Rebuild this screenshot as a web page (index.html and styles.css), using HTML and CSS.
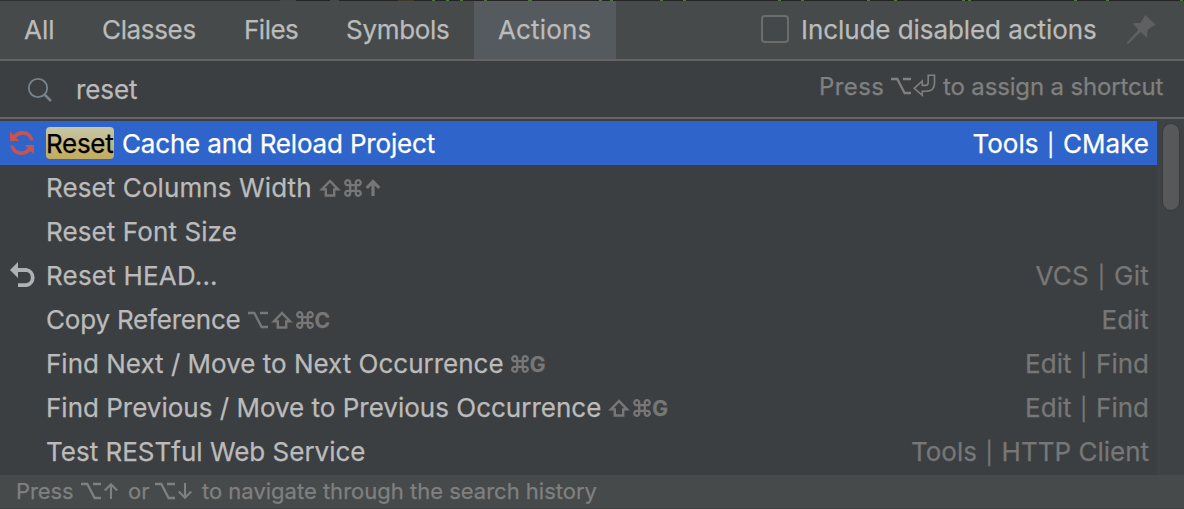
FILE: index.html
```html
<!DOCTYPE html>
<html lang="en">
<head>
<meta charset="utf-8">
<title>Search Everywhere</title>
<link rel="stylesheet" href="styles.css">
</head>
<body>
<svg class="defs" width="0" height="0" aria-hidden="true">
  <symbol id="shift" viewBox="0 0 22 18"><path d="M11 2 3 10.4H6.8V16.5H15.2V10.4H19Z" fill="none" stroke="currentColor" stroke-width="2.4"/></symbol>
  <symbol id="cmd" viewBox="0 0 18 18"><path d="M6.2 6.2H11.8V11.8H6.2ZM6.2 6.2H4A2.5 2.5 0 1 1 6.2 4ZM11.8 6.2V4A2.5 2.5 0 1 1 14 6.2ZM11.8 11.8H14A2.5 2.5 0 1 1 11.8 14ZM6.2 11.8V14A2.5 2.5 0 1 1 4 11.8Z" fill="none" stroke="currentColor" stroke-width="2.3"/></symbol>
  <symbol id="opt" viewBox="0 0 20 18"><path d="M0 2H6.3L13.6 16H20M12 2H20" fill="none" stroke="currentColor" stroke-width="2.3"/></symbol>
  <symbol id="upbold" viewBox="0 0 16 18"><path d="M8 17V3M1.7 9 8 2.6 14.3 9" fill="none" stroke="currentColor" stroke-width="3.2"/></symbol>
  <symbol id="up" viewBox="0 0 16 18"><path d="M8 17V2.5M1.8 8.5 8 2.3 14.2 8.5" fill="none" stroke="currentColor" stroke-width="2.1"/></symbol>
  <symbol id="return" viewBox="0 0 23 23"><path d="M1.2 14.3 9.3 7V11.4H12.5Q15.2 11.4 15.2 8.5V1.2H21.5V9Q21.5 17.3 13 17.3H9.3V21.3Z" fill="none" stroke="currentColor" stroke-width="1.6"/></symbol>
</svg>
<main class="popup">
  <svg class="backdrop" viewBox="0 0 1184 1" width="1184" height="1" aria-hidden="true">
    <path d="M0 .5H280" stroke="#323232"/><path d="M280 .5H296M330 .5H339" stroke="#454849"/><path d="M398 .5H414" stroke="#3b3928"/>
    <path d="M432 .5h3m11 0h3m11 0h3m21 0h3m41 0h4m67 0h3m8 0h3m47 0h3m20 0h3m92 0h3m20 0h3m63 0h3m24 0h3m65 0h3m3 0h3m103 0h3m29 0h3m71 0h3" stroke="#4c7540"/>
  </svg>
  <header class="tabs">
    <nav class="tab-list">
      <span class="tab tab-all">All</span><span class="tab tab-classes">Classes</span><span class="tab tab-files">Files</span><span class="tab tab-symbols">Symbols</span><span class="tab tab-actions">Actions</span>
    </nav>
    <span class="checkbox"></span>
    <span class="check-label">Include disabled actions</span>
    <svg class="pin" width="30" height="30" viewBox="0 0 30 30"><path d="M19.3 0 29.7 9.7Q25 11.5 21.5 15.3L21 22.7 14.7 17 2 29 .8 27.8 12.3 14.7 6.3 8.3 14.3 8Z" fill="#5f6060"/></svg>
  </header>
  <section class="search">
    <svg class="lens" width="26" height="26" viewBox="0 0 26 26"><circle cx="11" cy="11" r="9.2" fill="none" stroke="#78838b" stroke-width="1.8"/><path d="M17.5 17.5 24 24" stroke="#78838b" stroke-width="2.5"/></svg>
    <span class="query">reset</span>
    <span class="hint"><span class="hint-press">Press</span><svg class="hint-opt" width="20" height="18"><use href="#opt"/></svg><svg class="hint-return" width="23" height="23"><use href="#return"/></svg><span class="hint-rest">to assign a shortcut</span></span>
  </section>
  <section class="results">
    <ul class="list">
      <li class="row selected">
        <svg class="icon" width="26" height="26" viewBox="0 0 26 26"><path d="M1 1.5V11H10.3L7 7.7Q10 4.7 14 4.7 19 4.7 21.3 10.6H24.8Q22.5 1 13.3 1 8.3 1 4.4 5ZM25 24.5V15H15.7L19 18.3Q16 21.3 12 21.3 7 21.3 4.7 15.4H1.2Q3.5 25 12.7 25 17.7 25 21.6 21Z" fill="#c75450"/></svg>
        <span class="name"><mark>Reset</mark><span class="after-mark">Cache and Reload Project</span></span><span class="group">Tools <i>|</i> CMake</span>
      </li>
      <li class="row"><span class="name columns">Reset Columns Width</span><span class="keys"><svg width="22" height="18"><use href="#shift"/></svg><svg width="18" height="18"><use href="#cmd"/></svg><svg width="16" height="18"><use href="#upbold"/></svg></span></li>
      <li class="row"><span class="name columns">Reset Font Size</span></li>
      <li class="row">
        <svg class="icon undo" width="28" height="26" viewBox="0 0 28 26"><path d="M9 0V16L1 8Z" fill="#afb1b3"/><path d="M7 8H17.5A7.4 7.7 0 0 1 17.5 23.2H9" fill="none" stroke="#afb1b3" stroke-width="3.8"/></svg>
        <span class="name head">Reset HEAD...</span><span class="group vcs">VCS <i>|</i> Git</span>
      </li>
      <li class="row"><span class="name copy">Copy Reference</span><span class="keys"><svg width="20" height="18"><use href="#opt"/></svg><svg width="22" height="18"><use href="#shift"/></svg><svg width="18" height="18"><use href="#cmd"/></svg><b>C</b></span><span class="group edit">Edit</span></li>
      <li class="row"><span class="name">Find Next / Move to Next Occurrence</span><span class="keys"><svg width="18" height="18"><use href="#cmd"/></svg><b>G</b></span><span class="group">Edit <i>|</i> Find</span></li>
      <li class="row"><span class="name">Find Previous / Move to Previous Occurrence</span><span class="keys"><svg width="22" height="18"><use href="#shift"/></svg><svg width="18" height="18"><use href="#cmd"/></svg><b>G</b></span><span class="group">Edit <i>|</i> Find</span></li>
      <li class="row"><span class="name">Test RESTful Web Service</span><span class="group">Tools <i>|</i> HTTP Client</span></li>
    </ul>
    <div class="track"><div class="thumb"></div></div>
  </section>
  <footer class="footer">
    <span class="foot-press">Press</span><svg class="foot-opt" width="20" height="18"><use href="#opt"/></svg><svg class="foot-arrow" width="16" height="18"><use href="#up"/></svg><span class="foot-or">or</span><svg class="foot-opt" width="20" height="18"><use href="#opt"/></svg><svg class="foot-arrow down" width="16" height="18"><use href="#up"/></svg><span class="foot-rest">to navigate through the search history</span>
  </footer>
</main>
</body>
</html>
```
FILE: styles.css
```css
* { box-sizing: border-box; }
body { margin: 0; background: #3c3f41; overflow: hidden; font: 26px/44px Inter, sans-serif; color: #bbbbbb; -webkit-text-stroke: 0.25px currentColor; }
svg { display: block; flex: none; }
.defs { position: absolute; }
.popup { width: 1184px; height: 509px; display: flex; flex-direction: column; white-space: nowrap; }
.backdrop { background: #242424; }

.tabs { height: 60px; flex: none; display: flex; background: #464a4a; border-bottom: 2px solid #646464; }
.tab-list { display: flex; width: 761px; }
.tab { padding-left: 24px; line-height: 58px; }
.tab-all { width: 78px; }
.tab-classes { width: 142px; letter-spacing: -0.35px; }
.tab-files { width: 102px; letter-spacing: -0.5px; }
.tab-symbols { width: 152px; letter-spacing: -0.3px; }
.tab-actions { width: 142px; background: #555a5e; letter-spacing: 0.15px; }
.checkbox { width: 28px; height: 28px; margin-top: 14px; border: 2px solid #6b6d6d; border-radius: 4px; background: #43494a; }
.check-label { width: 325px; padding-left: 12px; line-height: 58px; letter-spacing: -0.07px; }
.pin { margin-top: 14px; margin-left: 12px; }

.search { height: 58px; flex: none; display: flex; border-bottom: 2px solid #646464; }
.lens { margin: 16px 0 0 27px; }
.query { margin-left: 23px; line-height: 58px; letter-spacing: -0.1px; }
.hint { display: flex; margin-left: auto; padding-right: 19px; font-size: 24px; line-height: 51px; color: #808080; }
.hint-press { width: 72px; letter-spacing: 0.4px; }
.hint-opt { margin-top: 16px; }
.hint-return { margin: 13px 7px 0 2px; }
.hint-rest { width: 222px; letter-spacing: -0.15px; }

.results { height: 356px; flex: none; display: flex; }
.list { width: 1157px; margin: 0; padding: 2px 0 0; list-style: none; }
.row { display: flex; position: relative; height: 44px; padding: 0 8px 0 46px; line-height: 46px; }
.row.selected { background: #2f65ca; color: #fff; }
.icon { position: absolute; left: 9px; top: 9px; }
.name { display: flex; }
.columns { letter-spacing: 0.1px; }
.head { letter-spacing: 0.2px; }
.copy { letter-spacing: -0.2px; }
mark { width: 68px; height: 32px; margin-top: 6px; border-radius: 4px; background: linear-gradient(#c7c6a8, #c2ab5b); color: #000; line-height: 34px; letter-spacing: -0.3px; }
.after-mark { margin-left: 8px; letter-spacing: -0.18px; }
.keys { display: flex; gap: 3px; margin: 14px 0 0 7px; height: 18px; color: #777777; }
.keys b { width: 16px; margin-left: -2px; font-size: 21px; line-height: 20px; }
.group { margin-left: auto; color: #777777; }
.group i { display: inline-block; width: 10px; font-size: 22px; font-style: normal; line-height: 20px; text-align: center; }
.selected .group { color: #fff; }
.vcs { letter-spacing: 0.25px; }
.edit { letter-spacing: 0.3px; }
.track { width: 27px; background: #3f4244; padding: 4px 0 0 5px; }
.thumb { width: 18px; height: 88px; border: 1px solid #37393a; border-radius: 9px; background: #57585a; }

.footer { display: flex; height: 34px; flex: none; padding-left: 16px; background: #464a4a; border-bottom: 1px solid #3f4242; color: #808080; font-size: 22px; line-height: 33px; }
.foot-press { width: 65px; letter-spacing: -0.1px; }
.foot-opt { margin-top: 7px; }
.foot-arrow { margin: 7px 9px 0 2px; }
.foot-or { width: 27px; }
.down { transform: rotate(180deg); }
```
